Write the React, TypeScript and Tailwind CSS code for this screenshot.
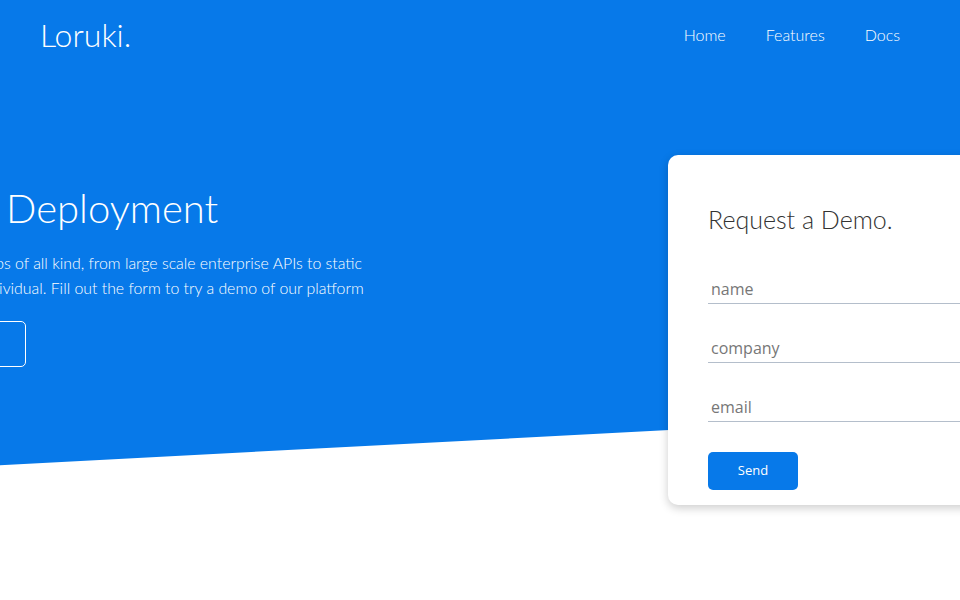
import React from 'react';

export default function App() {
  return (
    <div className="relative h-[600px] w-full overflow-hidden bg-white font-['Lato',sans-serif]">
      <header className="relative h-[470px] bg-[#0779e9] text-white">
        {/* navbar */}
        <nav className="flex h-[70px] items-center justify-between pl-10 pr-[60px]">
          <h1 className="text-[32px] font-light">Loruki.</h1>
          <ul className="flex gap-10 text-base font-light">
            <li><a href="#">Home</a></li>
            <li><a href="#">Features</a></li>
            <li><a href="#">Docs</a></li>
          </ul>
        </nav>

        {/* showcase */}
        <section className="flex">
          <div className="-ml-[107px] mt-[114px] w-[490px] shrink-0">
            <h1 className="text-[40px] leading-[48px] font-light">Easier Deployment</h1>
            <p className="mt-[18px] text-[15.85px] leading-[25px] font-light">
              Deploy web apps of all kind, from large scale enterprise APIs to static sites for the individual. Fill out the form to try a demo of our platform
            </p>
            <a href="#" className="mt-[21px] inline-block rounded-[5px] border border-white px-[30px] py-[10px] text-[15px] leading-6 font-light">
              Read More
            </a>
          </div>

          <div className="relative z-10 ml-[285px] mt-[85px] h-[350px] w-[400px] shrink-0 rounded-[10px] bg-white p-10 text-[#333] shadow-[0_3px_10px_rgba(0,0,0,0.2)]">
            <h2 className="text-[25px] leading-[48px] font-light">Request a Demo.</h2>
            <form className="mt-[32px] font-['Open_Sans',sans-serif]">
              <div>
                <input type="text" placeholder="name" className="h-[29px] w-full border-b border-[#b4becb] px-[3px] text-base leading-[22px] outline-none placeholder:text-[#777]" />
              </div>
              <div className="mt-[30px]">
                <input type="text" placeholder="company" className="h-[29px] w-full border-b border-[#b4becb] px-[3px] text-base leading-[22px] outline-none placeholder:text-[#777]" />
              </div>
              <div className="mt-[30px]">
                <input type="email" placeholder="email" className="h-[29px] w-full border-b border-[#b4becb] px-[3px] text-base leading-[22px] outline-none placeholder:text-[#777]" />
              </div>
              <button type="button" className="mt-[30px] h-[38px] w-[90px] rounded-[5px] bg-[#0779e9] text-[13px] text-white">
                Send
              </button>
            </form>
          </div>
        </section>

        {/* slanted bottom edge */}
        <div className="absolute left-0 right-0 top-[440px] h-[100px] -skew-y-3 bg-white" />
      </header>
    </div>
  );
}
